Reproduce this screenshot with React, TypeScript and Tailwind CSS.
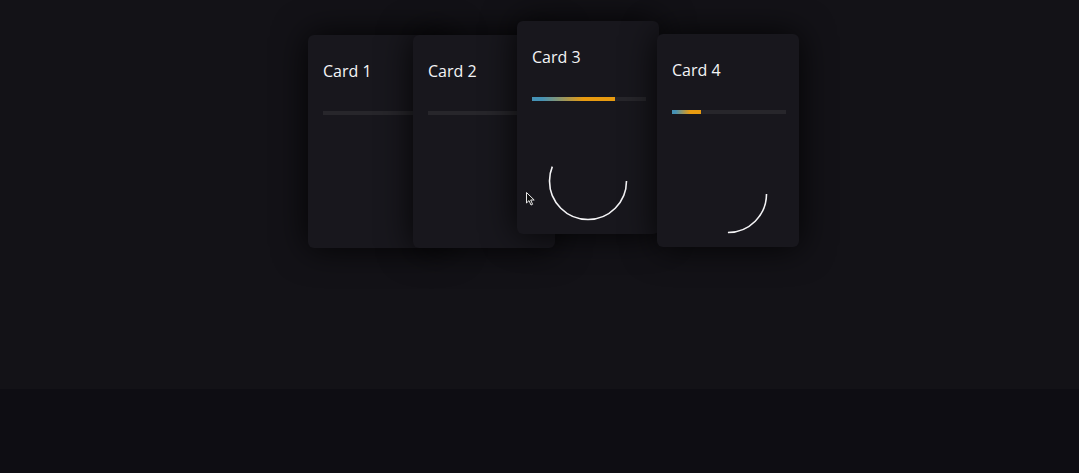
import React from "react";

type CardData = {
  title: string;
  bar: number;
  arc: number;
  className: string;
};

const cards: CardData[] = [
  { title: "Card 1", bar: 0, arc: 0, className: "" },
  { title: "Card 2", bar: 0, arc: 0, className: "-ml-[37px]" },
  { title: "Card 3", bar: 73, arc: 0.56, className: "-ml-[38px] -translate-y-[14px]" },
  { title: "Card 4", bar: 25, arc: 0.25, className: "-ml-[2px] -translate-y-px" },
];

const R = 38.5;
const CIRC = 2 * Math.PI * R;

function Card({ title, bar, arc, className }: CardData) {
  return (
    <div
      className={`relative flex h-[213px] w-[142px] shrink-0 flex-col rounded-[6px] bg-[#18171d] pl-[15px] pt-[24px] shadow-[0_0_34px_rgba(0,0,0,0.85)] ${className}`}
    >
      <h3 className="text-base leading-6 text-[#f4f4f6]">{title}</h3>
      <div className="mt-[28px] h-1 w-[114px] overflow-hidden bg-[#27262b]">
        <div
          className="h-full bg-[linear-gradient(90deg,#4592b5_12%,#e89b10_62%)]"
          style={{ width: `${bar}%` }}
        />
      </div>
      <div className="mt-[40px] flex w-[112px] justify-center">
        <svg width="80" height="80" viewBox="0 0 80 80" fill="none">
          {arc > 0 && (
            <circle
              cx="40"
              cy="40"
              r={R}
              stroke="#f4f4f6"
              strokeWidth="1.6"
              strokeDasharray={`${CIRC * arc} ${CIRC}`}
            />
          )}
        </svg>
      </div>
    </div>
  );
}

export default function App() {
  return (
    <div className="relative min-h-[473px] bg-[#0e0d13] font-['Open_Sans',sans-serif]">
      <section className="flex h-[389px] items-start justify-center bg-[#131217] pl-[28px] pt-[35px]">
        {cards.map((c) => (
          <Card key={c.title} {...c} />
        ))}
      </section>
      <svg
        className="absolute left-[526px] top-[192px]"
        width="10"
        height="15"
        viewBox="0 0 10 15"
      >
        <path
          d="M0.5 0.5 L0.5 11 L3 8.6 L5 13 L6.6 12.3 L4.7 8 L8.2 8 Z"
          fill="#111"
          stroke="#e8e8e8"
          strokeWidth="1"
        />
      </svg>
    </div>
  );
}
